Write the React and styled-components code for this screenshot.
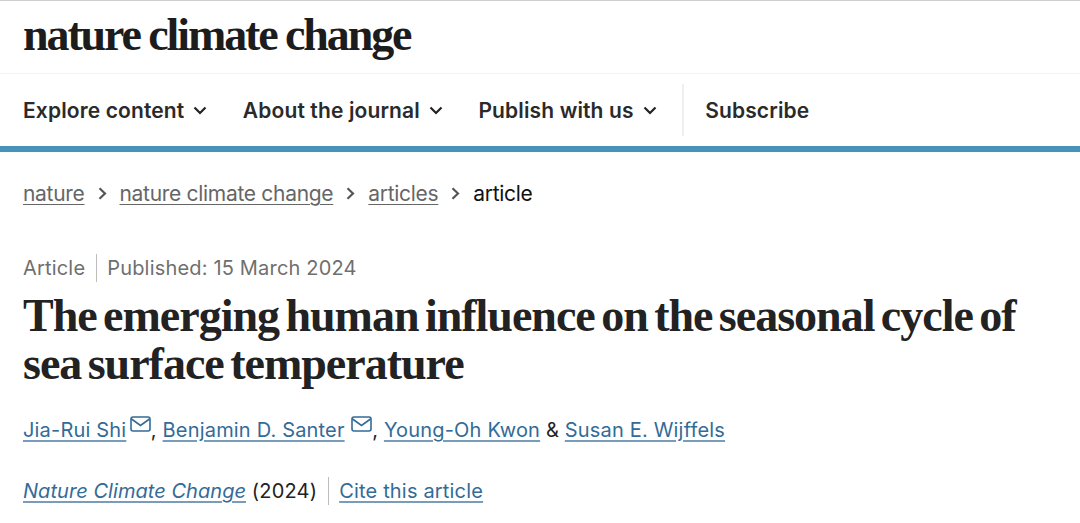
import styled, { createGlobalStyle } from "styled-components";

const GlobalStyle = createGlobalStyle`
  html, body {
    margin: 0;
    padding: 0;
    background: #fff;
    overflow: hidden;
  }
  body {
    font-family: Inter, "Liberation Sans", sans-serif;
  }
`;

const Page = styled.div`
  width: 1080px;
  height: 523px;
  overflow: hidden;
  border-top: 1px solid #cfcfcf;
  box-sizing: border-box;
`;

const Masthead = styled.header`
  height: 72px;
  padding-left: 23px;
  display: flex;
  align-items: center;
  border-bottom: 1px solid #f3f3f3;
`;

const Logo = styled.div`
  font-family: "Liberation Serif", serif;
  font-weight: 700;
  font-size: 46px;
  letter-spacing: -2.1px;
  word-spacing: -1px;
  color: #1c1c1c;
  line-height: 1;
  margin-top: -4px;
`;

const Nav = styled.nav`
  height: 72px;
  padding-left: 23px;
  display: flex;
  align-items: center;
  border-bottom: 6px solid #4692b8;
`;

const NavItem = styled.a`
  display: flex;
  align-items: center;
  gap: 9px;
  margin-right: 35.5px;
  font-size: 21px;
  font-weight: 600;
  letter-spacing: 0.13px;
  color: #2a2a2a;
`;

const NavDivider = styled.span`
  width: 2px;
  height: 52px;
  background: #efefef;
  margin-right: 21px;
  margin-left: -10px;
`;

const Chevron = () => (
  <svg width="14" height="9" viewBox="0 0 14 9" fill="none">
    <path d="M1.5 1.5L7 7l5.5-5.5" stroke="#222" strokeWidth="2.2" />
  </svg>
);

const Breadcrumbs = styled.div`
  padding: 28px 0 0 23px;
  display: flex;
  align-items: center;
  height: 26px;
  font-size: 21px;
  letter-spacing: -0.3px;
`;

const Crumb = styled.a`
  color: #666;
  text-decoration: underline;
  text-underline-offset: 3px;
  text-decoration-thickness: 1px;
`;

const CrumbCurrent = styled.span`
  color: #111;
`;

const CrumbArrow = styled.svg`
  margin: 0 13px;
`;

const Arrow = () => (
  <CrumbArrow width="9" height="13" viewBox="0 0 9 13" fill="none">
    <path d="M1.5 1.2L7 6.5 1.5 11.8" stroke="#555" strokeWidth="2.2" />
  </CrumbArrow>
);

const Meta = styled.div`
  margin: 48px 0 0 23px;
  display: flex;
  align-items: center;
  height: 28px;
  font-size: 20px;
  letter-spacing: 0.18px;
  color: #6f6f6f;
`;

const MetaDivider = styled.span`
  width: 1px;
  height: 28px;
  background: #bdbdbd;
  margin: 0 10.5px;
`;

const Title = styled.h1`
  margin: 10px 0 0 23px;
  font-family: "Liberation Serif", serif;
  font-weight: 700;
  font-size: 46px;
  line-height: 48px;
  letter-spacing: -1px;
  word-spacing: -4.1px;
  color: #222;
`;

const Authors = styled.div`
  margin: 28px 0 0 23px;
  height: 28px;
  display: flex;
  align-items: center;
  font-size: 20px;
  letter-spacing: 0.18px;
  color: #222;
`;

const PersonLink = styled.a`
  color: #336b97;
  text-decoration: underline;
  text-decoration-color: #7a9cbb;
  text-underline-offset: 3px;
  text-decoration-thickness: 1.5px;
`;

const Mail = styled.svg`
  margin: -12px 0 0 ${(props) => props.$gap}px;
`;

const MailIcon = ({ gap }) => (
  <Mail $gap={gap} width="21" height="16" viewBox="0 0 21 16" fill="none">
    <rect x="1" y="1" width="19" height="14" rx="2" stroke="#336b97" strokeWidth="1.6" />
    <path d="M1.5 3l9 6.5 9-6.5" stroke="#336b97" strokeWidth="1.6" />
  </Mail>
);

const Sep = styled.span`
  white-space: pre;
`;

const Citation = styled.div`
  margin: 33px 0 0 23px;
  height: 28px;
  display: flex;
  align-items: center;
  font-size: 20px;
  letter-spacing: 0.18px;
  color: #222;
`;

const JournalLink = styled(PersonLink)`
  font-style: italic;
  letter-spacing: 0.05px;
`;

export default function App() {
  return (
    <Page>
      <GlobalStyle />
      <Masthead>
        <Logo>nature climate change</Logo>
      </Masthead>
      <Nav>
        <NavItem>Explore content <Chevron /></NavItem>
        <NavItem>About the journal <Chevron /></NavItem>
        <NavItem>Publish with us <Chevron /></NavItem>
        <NavDivider />
        <NavItem>Subscribe</NavItem>
      </Nav>
      <Breadcrumbs>
        <Crumb>nature</Crumb>
        <Arrow />
        <Crumb>nature climate change</Crumb>
        <Arrow />
        <Crumb>articles</Crumb>
        <Arrow />
        <CrumbCurrent>article</CrumbCurrent>
      </Breadcrumbs>
      <Meta>
        Article
        <MetaDivider />
        Published: 15 March 2024
      </Meta>
      <Title>
        The emerging human influence on the seasonal cycle of
        <br />
        sea surface temperature
      </Title>
      <Authors>
        <PersonLink>Jia-Rui Shi</PersonLink>
        <MailIcon gap={3.5} />
        <Sep>, </Sep>
        <PersonLink>Benjamin D. Santer</PersonLink>
        <MailIcon gap={6.5} />
        <Sep>, </Sep>
        <PersonLink>Young-Oh Kwon</PersonLink>
        <Sep> &amp; </Sep>
        <PersonLink>Susan E. Wijffels</PersonLink>
      </Authors>
      <Citation>
        <JournalLink>Nature Climate Change</JournalLink>
        <Sep> (2024)</Sep>
        <MetaDivider />
        <PersonLink>Cite this article</PersonLink>
      </Citation>
    </Page>
  );
}
